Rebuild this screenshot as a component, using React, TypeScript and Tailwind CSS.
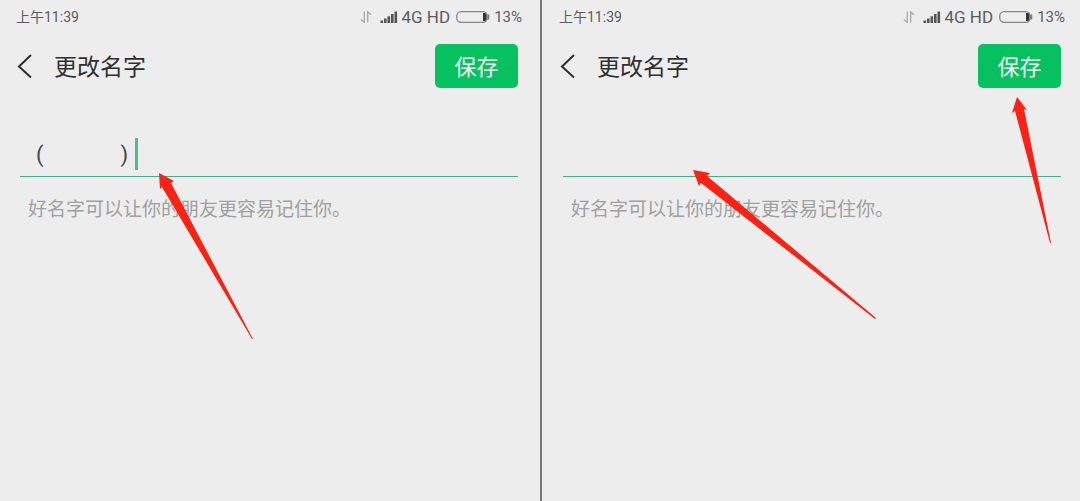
import { useState } from "react";
import type { ReactNode } from "react";

function StatusBar() {
  return (
    <div className="-mx-1 flex h-[34px] items-center justify-between text-[15px] leading-5 text-[#5c5c5c]">
      <span className="text-sm">上午11:39</span>
      <div className="flex items-center">
        <svg className="mr-2 h-3 w-3" viewBox="0 0 12 12" fill="none" stroke="#a9a9a9" strokeWidth="1.3" aria-hidden="true">
          <path d="M1 8.5 4.3 11.5V0.5" />
          <path d="M7.7 11.5V0.8L11 3.8" />
        </svg>
        <svg className="mr-1 h-3 w-[18px]" viewBox="0 0 18 12" fill="#555" aria-hidden="true">
          <rect x="0.5" y="9.5" width="2.6" height="2.5" />
          <rect x="4" y="7.5" width="2.6" height="4.5" />
          <rect x="7.5" y="5.3" width="2.6" height="6.7" />
          <rect x="11" y="3" width="2.6" height="9" />
          <rect x="14.5" y="0.5" width="2.6" height="11.5" />
        </svg>
        <span className="mr-1.5 text-[17px] leading-5">4G HD</span>
        <svg className="mr-1 h-3 w-[34px]" viewBox="0 0 34 12" fill="none" aria-hidden="true">
          <rect x="0.7" y="0.7" width="30.6" height="10.6" rx="4.5" stroke="#858585" strokeWidth="1.3" />
          <path d="M27 2h1.5a2 2 0 0 1 2 2v4a2 2 0 0 1-2 2H27z" fill="#333" />
          <path d="M32.5 3.5v5" stroke="#777" strokeWidth="1.5" />
        </svg>
        <span>13%</span>
      </div>
    </div>
  );
}

type ScreenProps = {
  id: string;
  initialName: string;
  caret?: boolean;
  className: string;
  children: ReactNode;
};

function RenameScreen({ id, initialName, caret, className, children }: ScreenProps) {
  const [name, setName] = useState(initialName);
  return (
    <section className={`relative min-h-screen ${className}`}>
      <StatusBar />
      <header className="mt-2.5 flex h-11 items-center">
        <button type="button" aria-label="返回" className="-ml-1 flex h-8 w-5 items-center justify-start">
          <svg className="h-6 w-4" viewBox="0 0 16 24" fill="none" stroke="#2f2f2f" strokeWidth="2" aria-hidden="true">
            <path d="M15 1 3 12.5l12 11" />
          </svg>
        </button>
        <h1 className="ml-[18px] pt-1 text-[23px] leading-8 text-[#303030]">更改名字</h1>
        <button type="button" className="ml-auto h-11 w-[83px] rounded-[5px] bg-[#07c160] pt-1 text-[22px] leading-8 text-[#e9fbf1]">
          保存
        </button>
      </header>
      <div className="relative mt-11 border-b border-[#41b08b]">
        <input
          id={id}
          aria-label="名字"
          aria-describedby={`${id}-hint`}
          value={name}
          onChange={(e) => setName(e.target.value)}
          className="block h-11 w-full bg-transparent px-4 pb-1 text-[22px] text-[#444] outline-none"
        />
        {caret && <span className="absolute bottom-1.5 left-[115px] h-8 w-[3px] bg-[#54b795]" />}
      </div>
      <p id={`${id}-hint`} className="mt-[17px] pl-2 text-[19px] leading-8 text-[#a0a0a0]">
        好名字可以让你的朋友更容易记住你。
      </p>
      {children}
    </section>
  );
}

export default function App() {
  return (
    <main className="grid min-h-screen grid-cols-2 bg-[#ededed] font-[Roboto,'Noto_Sans_CJK_SC',sans-serif]">
      <RenameScreen id="name-before" initialName={"(\u3000\u3000\u3000  )"} caret className="pr-[22px] pl-5">
        <svg className="pointer-events-none absolute top-[173px] left-[158px] h-[168px] w-24" viewBox="0 0 96 168" fill="#fa2215" aria-hidden="true">
          <path d="M1 0 16 8 13 10 95 166 94 166 4 14 2 16Z" />
        </svg>
      </RenameScreen>
      <RenameScreen id="name-after" initialName="" className="border-l-2 border-[#777] pr-[19px] pl-[21px]">
        <svg className="pointer-events-none absolute top-[170px] left-[151px] h-[150px] w-[184px]" viewBox="0 0 184 150" fill="#fa2215" aria-hidden="true">
          <path d="M0 0 17 3 14 6 183 148 182 149 8 13 6 16Z" />
        </svg>
        <svg className="pointer-events-none absolute top-[97px] right-7 h-[148px] w-10" viewBox="0 0 40 148" fill="#fa2215" aria-hidden="true">
          <path d="M5 0 15 13 12 12 39 146 38 146 3 14 0 16Z" />
        </svg>
      </RenameScreen>
    </main>
  );
}
